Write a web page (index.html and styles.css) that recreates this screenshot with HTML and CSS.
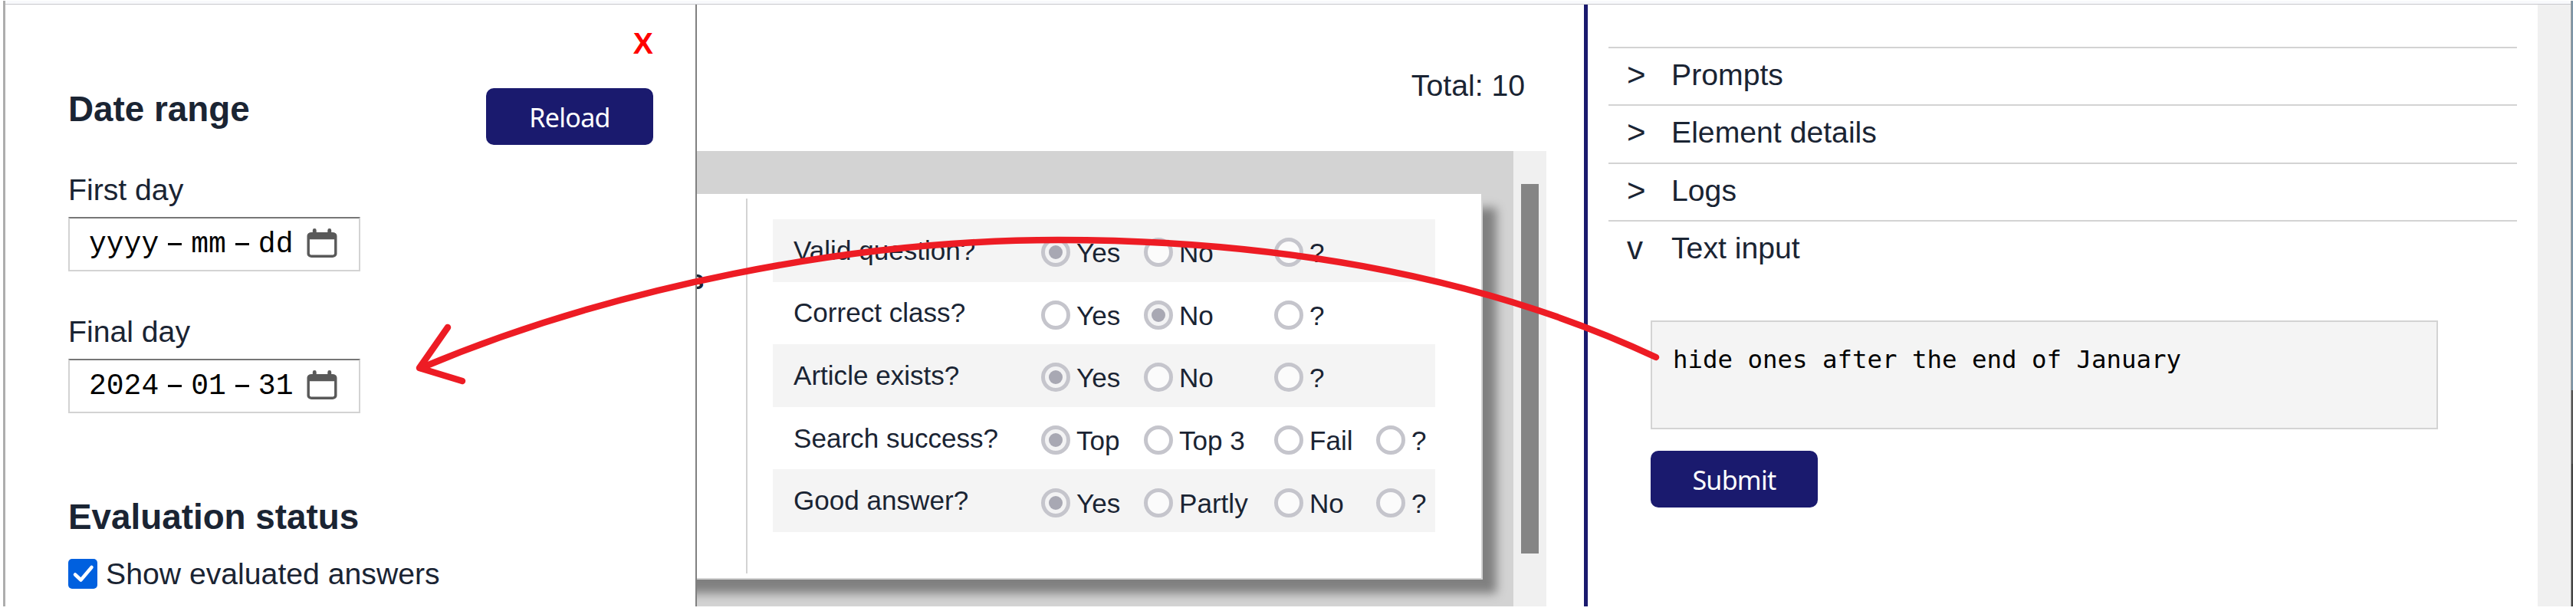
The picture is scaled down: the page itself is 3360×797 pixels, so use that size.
FILE: index.html
```html
<!DOCTYPE html>
<html lang="en">
<head>
<meta charset="utf-8">
<title>Answer evaluation</title>
<link rel="stylesheet" href="styles.css">
</head>
<body>
<div class="frame">
<div class="window">
  <div class="toolbar-edge"></div>
  <div class="workspace">
    <aside class="filters">
      <div class="close">X</div>
      <div class="filters-head">
        <h3>Date range</h3>
        <button class="btn reload"><span>Reload</span></button>
      </div>
      <div class="label first">First day</div>
      <div class="date">
        <span>yyyy</span><i></i><span>mm</span><i></i><span>dd</span>
        <svg class="cal" viewBox="0 0 40 40"><path fill="#595959" fill-rule="evenodd" d="M7.500 2.500a2.500 2.500 0 0 1 5 0V5h15V2.500a2.500 2.500 0 0 1 5 0V5H34a6 5 0 0 1 6 5v24a6 5 0 0 1-6 5H6a6 5 0 0 1-6-5V10a6 5 0 0 1 6-5h1.500zM3.500 14.500V33a3 2.500 0 0 0 3 2.500h27a3 2.500 0 0 0 3-2.500V14.500z"/></svg>
      </div>
      <div class="label final">Final day</div>
      <div class="date">
        <span>2024</span><i></i><span>01</span><i></i><span>31</span>
        <svg class="cal" viewBox="0 0 40 40"><path fill="#595959" fill-rule="evenodd" d="M7.500 2.500a2.500 2.500 0 0 1 5 0V5h15V2.500a2.500 2.500 0 0 1 5 0V5H34a6 5 0 0 1 6 5v24a6 5 0 0 1-6 5H6a6 5 0 0 1-6-5V10a6 5 0 0 1 6-5h1.500zM3.500 14.500V33a3 2.500 0 0 0 3 2.500h27a3 2.500 0 0 0 3-2.500V14.500z"/></svg>
      </div>
      <h3 class="status">Evaluation status</h3>
      <div class="check">
        <svg viewBox="0 0 38 39"><rect width="38" height="39" rx="5" fill="#0060df"/><path d="M9 20.500l7.500 7L30.500 11" fill="none" stroke="#fff" stroke-width="4.500" stroke-linecap="round" stroke-linejoin="round"/></svg>
        <span>Show evaluated answers</span>
      </div>
    </aside>
    <main class="answers">
      <div class="total">Total: 10</div>
      <div class="scroller">
        <div class="canvas">
          <div class="card">
            <div class="answer">s</div>
            <div class="questions">
              <div class="q"><span>Valid question?</span><label><b class="on"></b>Yes</label><label><b></b>No</label><label><b></b>?</label></div>
              <div class="q"><span>Correct class?</span><label><b></b>Yes</label><label><b class="on"></b>No</label><label><b></b>?</label></div>
              <div class="q"><span>Article exists?</span><label><b class="on"></b>Yes</label><label><b></b>No</label><label><b></b>?</label></div>
              <div class="q"><span>Search success?</span><label><b class="on"></b>Top</label><label><b></b>Top 3</label><label><b></b>Fail</label><label><b></b>?</label></div>
              <div class="q"><span>Good answer?</span><label><b class="on"></b>Yes</label><label><b></b>Partly</label><label><b></b>No</label><label><b></b>?</label></div>
            </div>
          </div>
        </div>
        <div class="track"><div class="thumb"></div></div>
      </div>
    </main>
    <section class="panel">
      <div class="item"><em>&gt;</em>Prompts</div>
      <div class="item"><em>&gt;</em>Element details</div>
      <div class="item"><em>&gt;</em>Logs</div>
      <div class="item"><em>v</em>Text input</div>
      <div class="entry"><span>hide ones after the end of January</span></div>
      <button class="btn submit"><span>Submit</span></button>
    </section>
    <div class="page-scroll"></div>
  </div>
</div>
<div class="desktop-edge"></div>
</div>
<svg class="arrow" viewBox="0 0 3360 797">
  <path d="M549 480C798 375 1110 313 1380 313C1640 313 1920 353 2160 466"/>
  <path d="M584 427L547 480L603 497"/>
</svg>
</body>
</html>
```
FILE: styles.css
```css
* { box-sizing: border-box; }
body {
  margin: 0;
  width: 3360px;
  height: 797px;
  overflow: hidden;
  position: relative;
  background: #fff;
  color: #1a2433;
  font: 39.2px/44px "Liberation Sans", Arial, sans-serif;
}
.frame {
  display: flex;
  width: 3352px;
  height: 790px;
  margin: 1px 0 0 4px;
}
.window {
  flex: 1;
  display: flex;
  flex-direction: column;
  border-left: 3px solid #adadad;
}
.desktop-edge {
  width: 3px;
  border-left: 1px solid #a9a9a9;
  background: linear-gradient(#758ea0 508px, #4a4a4a 508px 604px, #383838 604px);
}
.toolbar-edge {
  height: 5px;
  flex: none;
  background: #f8f9fc;
  border-bottom: 1px solid #c8c8cc;
}
.workspace { flex: 1; min-height: 0; display: flex; }

.filters {
  width: 902px;
  flex: none;
  padding: 29px 55px 0 82px;
  border-right: 2px solid #808080;
}
.close {
  text-align: right;
  color: #f00;
  font-weight: bold;
}
.filters-head {
  display: flex;
  justify-content: space-between;
  align-items: flex-start;
  margin-top: 36px;
}
h3 { margin: 0; padding-top: 1px; font-size: 45.8px; line-height: 54px; }
.btn {
  display: flex;
  align-items: center;
  justify-content: center;
  height: 74px;
  padding: 2px 0 0;
  border: 0;
  border-radius: 10px;
  background: #1a1a6e;
  color: #fff;
  font: 34px/44px "Noto Sans", sans-serif;
  letter-spacing: -0.7px;
}
.reload { width: 218px; }
.label.first { margin-top: 37px; }
.label.final { margin-top: 57px; }
.date {
  display: flex;
  align-items: center;
  width: 381px;
  height: 71px;
  margin-top: 13px;
  padding: 0 28px 0 25px;
  border: 2px solid #d3d3d3;
  border-top-color: #767676;
  color: #000;
  font: 38px/44px "Liberation Mono", monospace;
}
.date i { width: 18px; height: 3px; background: #000; margin: 0 12px; }
.cal { width: 40px; height: 39px; margin: -3px 0 0 auto; display: block; }
.status { margin-top: 108px; }
.check {
  display: flex;
  align-items: center;
  gap: 11px;
  height: 39px;
  margin-top: 27px;
}
.check svg { width: 38px; height: 39px; }

.answers { width: 1157px; flex: none; padding: 84px 49px 0 0; }
.total { text-align: right; padding-right: 28px; }
.scroller { display: flex; height: 594px; margin-top: 63px; }
.canvas {
  width: 1065px;
  padding-top: 56px;
  overflow: hidden;
  background: #d3d3d3;
}
.card {
  display: flex;
  width: 1065px;
  height: 503px;
  margin-left: -40px;
  padding: 6px 0;
  background: #fff;
  border: 2px solid #d3d3d3;
  border-width: 0 2px 2px 0;
  box-shadow: 18px 18px 12px #808080;
  font-size: 35.1px;
}
.answer {
  width: 106px;
  padding: 84px 0 0 30px;
  border-right: 2px solid #d3d3d3;
  font-weight: bold;
}
.questions {
  display: grid;
  grid-template-rows: repeat(5, 81.6px);
  width: 864px;
  margin: 27px 0 0 33px;
}
.q {
  display: grid;
  grid-template-columns: 323px 134px 170px 133px 77px;
  align-items: center;
  padding-left: 27px;
  line-height: 46px;
}
.q:nth-child(odd) { background: #f4f4f4; }
.q label { display: flex; align-items: center; gap: 8px; padding-top: 7px; }
.q b {
  display: flex;
  align-items: center;
  justify-content: center;
  width: 38px;
  height: 38px;
  margin-top: -2px;
  border: 5px solid #c5c5cc;
  border-radius: 50%;
  background: rgba(255, 255, 255, .6);
}
.q .on { background: #f3f3f4; }
.q .on::after { content: ""; width: 18px; height: 18px; border-radius: 50%; background: #a8a8b3; }
.track { width: 43px; padding: 43px 10px 0; background: #f0f0f0; }
.thumb { height: 482px; background: #858585; }

.panel {
  width: 1244px;
  flex: none;
  padding: 55px 27px 0;
  border-left: 5px solid #1a1a6e;
}
.item {
  display: flex;
  height: 75.400px;
  padding: 13px 0 0 24px;
  border-top: 2px solid #d3d3d3;
}
.item em { width: 58px; font-style: normal; font-size: 42px; }
.entry {
  width: 1027px;
  height: 142px;
  margin: 55px 0 28px 55px;
  padding: 25px 27px;
  border: 2px solid #d3d3d3;
  background: #f4f4f4;
  color: #000;
  font: 32.400px/48px "DejaVu Sans Mono", monospace;
}
.submit { width: 218px; margin-left: 55px; }
.page-scroll { flex: 1; background: #f0f0f0; }

.arrow {
  position: absolute;
  left: 0;
  top: 0;
  width: 3360px;
  height: 797px;
  fill: none;
  stroke: #ed1c24;
  stroke-width: 8.500px;
  stroke-linecap: round;
  stroke-linejoin: round;
}
```
